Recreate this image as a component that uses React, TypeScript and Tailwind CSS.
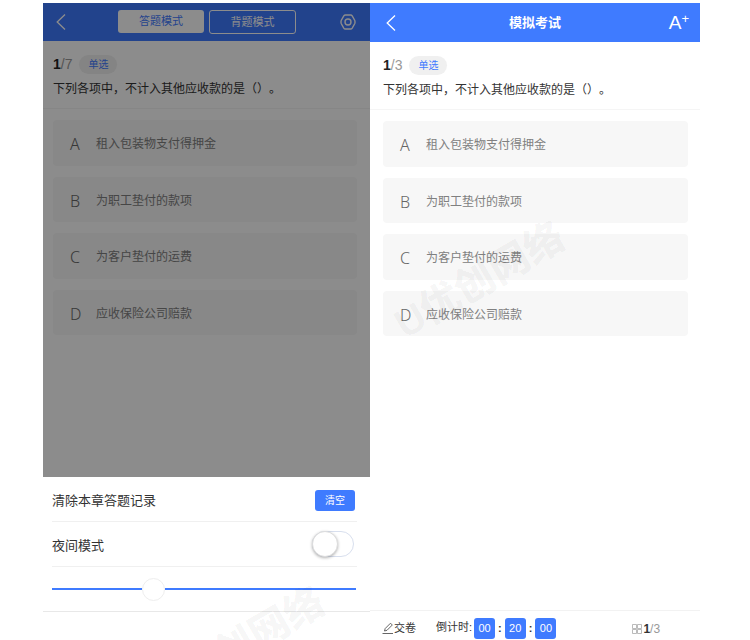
const FONT = "font-['Liberation_Sans','Noto_Sans_CJK_SC',sans-serif]"

const options = [
  { key: 'A', text: '租入包装物支付得押金' },
  { key: 'B', text: '为职工垫付的款项' },
  { key: 'C', text: '为客户垫付的运费' },
  { key: 'D', text: '应收保险公司赔款' },
]

const Back = () => (
  <svg width="10" height="16" viewBox="0 0 10 16" fill="none" stroke="white" strokeWidth="1.3">
    <path d="M9 .5 1.2 8 9 15.5" />
  </svg>
)

const Gear = () => (
  <svg width="18" height="18" viewBox="0 0 18 18" fill="none" stroke="white" strokeWidth="1.4">
    <path d="M6.4 2h5.2c.7 0 1.2.3 1.6.9l2.6 4.6c.3.9.3 2.1 0 3l-2.6 4.6c-.4.6-.9.9-1.6.9H6.4c-.7 0-1.2-.3-1.6-.9L2.200 10.500c-.3-.9-.3-2.100 0-3l2.600-4.600c.4-.6.9-.9 1.600-.9Z" />
    <circle cx="9" cy="9" r="3" />
  </svg>
)

const Question = ({ total, inset }: { total: number; inset: string }) => (
  <>
    <div className={`h-[68px] border-b border-[#f5f5f5] pt-[13px] ${inset}`}>
      <div className="flex h-[20px] items-center">
        <span className="text-[14px] font-bold text-[#222]">1</span>
        <span className="text-[14px] text-[#999]">/{total}</span>
        <span className="ml-[7px] flex h-[19px] w-[38px] items-center justify-center rounded-full bg-[#f0f0f0] text-[10px] text-[#3f7bff]">
          单选
        </span>
      </div>
      <p className="mt-[6px] text-[12px] leading-[18px] text-[#333] [text-spacing-trim:space-all]">
        下列各项中，不计入其他应收款的是（）。
      </p>
    </div>
    <div className={`flex flex-col gap-[11px] pt-[11px] ${inset}`}>
      {options.map((o) => (
        <div key={o.key} className="flex h-[45.500px] items-center rounded-[4px] bg-[#f7f7f7] pt-[3px] pl-[17px]">
          <span className="w-[26px] font-['Noto_Sans',sans-serif] text-[16px] font-light text-[#666]">{o.key}</span>
          <span className="text-[12px] text-[#808080]">{o.text}</span>
        </div>
      ))}
    </div>
  </>
)

const Watermark = ({ className }: { className: string }) => (
  <span
    className={`pointer-events-none absolute rotate-[-30deg] text-[40px] font-black whitespace-nowrap text-black/[0.04] ${className}`}
  >
    U优创网络
  </span>
)

const LeftPanel = () => (
  <div className="relative flex w-[327px] flex-col">
    <div className="relative h-[474px] overflow-hidden bg-white">
      <div className="flex h-[38px] items-center bg-[#3f7bff] pr-[13px] pl-[13px]">
        <Back />
        <div className="ml-[52px] flex gap-[5px]">
          <span className="flex h-[23px] w-[86px] items-center justify-center rounded-[3px] bg-white text-[11px] text-[#3f7bff]">
            答题模式
          </span>
          <span className="flex h-[24px] w-[87px] items-center justify-center rounded-[3px] border border-white text-[11px] text-white">
            背题模式
          </span>
        </div>
        <span className="ml-auto">
          <Gear />
        </span>
      </div>
      <Question total={7} inset="pr-[13px] pl-[10px]" />
      <div className="absolute inset-0 bg-black/45" />
    </div>
    <div className="border-b border-[#e8e8e8] bg-white">
      <div className="mr-[13px] ml-[9px] flex h-[45px] items-center justify-between border-b border-[#f0f0f0] pr-[2px]">
        <span className="pt-1 text-[13px] text-[#333]">清除本章答题记录</span>
        <button
          type="button"
          className="mt-[2px] flex h-[21px] w-[40px] items-center justify-center rounded-[3px] bg-[#3f7bff] text-[10px] text-white"
        >
          清空
        </button>
      </div>
      <div className="mr-[13px] ml-[9px] flex h-[45px] items-center justify-between border-b border-[#f0f0f0] pr-[3px]">
        <span className="pt-1 text-[13px] text-[#333]">夜间模式</span>
        <div className="relative h-[26px] w-[42px] rounded-full border border-[#d8dfee] bg-white">
          <div className="absolute -top-px -left-px h-[26px] w-[26px] rounded-full border border-[#ddd] bg-white shadow-[0_1px_3px_rgba(0,0,0,0.3)]" />
        </div>
      </div>
      <div className="mr-[14px] ml-[9px] flex h-[44px] items-center">
        <div className="h-[2px] flex-1 bg-[#3f7bff]" />
        <div className="h-[23px] w-[23px] rounded-full border border-[#eee] bg-white" />
        <div className="h-[2px] w-[191px] bg-[#3f7bff]" />
      </div>
    </div>
  </div>
)

const TimeBox = ({ value }: { value: string }) => (
  <span className="flex h-[21px] w-[21px] items-center justify-center rounded-[3px] bg-[#3f7bff] text-[11px] font-normal text-white">
    {value}
  </span>
)

const RightPanel = () => (
  <div className="relative flex h-[637px] w-[330px] flex-col overflow-hidden bg-white">
    <div className="relative flex h-[39px] items-center justify-center bg-[#3f7bff]">
      <span className="absolute left-[16px] flex">
        <Back />
      </span>
      <span className="text-[13px] font-bold text-white">模拟考试</span>
      <span className="absolute right-[11px] flex items-start text-[19px] leading-none font-light text-white">
        A<span className="-mt-px text-[13px] leading-none">+</span>
      </span>
    </div>
    <Question total={3} inset="pr-[12px] pl-[13px]" />
    <div className="mt-auto flex h-[30px] items-center border-t border-[#f2f2f2] pt-[6px] pl-[12px]">
      <svg width="12" height="13" viewBox="0 0 12 13" fill="none" stroke="#555" strokeWidth="0.9">
        <path d="M2.500 9 3.200 6.500 8.500 1.200 10.300 3 5 8.300 2.500 9ZM.5 11.500H11" />
      </svg>
      <span className="text-[11px] text-[#333]">交卷</span>
      <span className="ml-[20px] -translate-y-px text-[11px] text-[#333]">倒计时:</span>
      <span className="ml-[2px] flex items-center gap-[3px] text-[11px] font-bold text-[#333]">
        <TimeBox value="00" />:<TimeBox value="20" />:<TimeBox value="00" />
      </span>
      <span className="ml-[76px] flex items-center text-[12px] text-[#999]">
        <svg width="10" height="10" viewBox="0 0 10 10" fill="none" stroke="#aaa" strokeWidth="0.8">
          <path d="M.5.500h4v4h-4zM5.500.500h4v4h-4zM.5 5.500h4v4h-4zM5.500 5.500h4v4h-4z" />
        </svg>
        <b className="ml-px text-[#333]">1</b>/3
      </span>
    </div>
  </div>
)

export default function App() {
  return (
    <div className={`relative flex h-[640px] w-[750px] overflow-hidden bg-white pt-[3px] pl-[43px] ${FONT}`}>
      <LeftPanel />
      <RightPanel />
      <Watermark className="top-[250px] left-[385px]" />
      <Watermark className="top-[615px] left-[145px]" />
    </div>
  )
}
